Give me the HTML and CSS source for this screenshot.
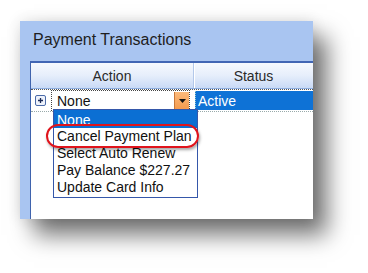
FILE: index.html
```html
<!DOCTYPE html>
<html>
<head>
<meta charset="utf-8">
<link rel="stylesheet" href="styles.css">
</head>
<body>
<div class="stage">
  <div class="panel">
    <div class="title">Payment Transactions</div>
    <div class="grid">
      <div class="header">
        <div class="hcell action">Action</div>
        <div class="hcell status">Status</div>
      </div>
      <div class="row">
        <div class="rowhead">
          <span class="plus"><svg width="11" height="11" viewBox="0 0 11 11"><rect x="0.5" y="0.5" width="10" height="10" rx="1.5" fill="#eef2fb" stroke="#4b6aa8"/><path d="M3 5.5h5M5.5 3v5" stroke="#1c2b57" stroke-width="1.3"/></svg></span>
        </div>
        <div class="combo">
          <span class="combotext">None</span>
          <span class="dropbtn"><svg width="7" height="4" viewBox="0 0 7 4"><path d="M0 0h7L3.5 4z" fill="#111"/></svg></span>
        </div>
        <div class="activecell">Active</div>
      </div>
    </div>
    <ul class="droplist">
      <li class="sel">None</li>
      <li>Cancel Payment Plan</li>
      <li>Select Auto Renew</li>
      <li>Pay Balance $227.27</li>
      <li>Update Card Info</li>
    </ul>
    <div class="oval"></div>
  </div>
</div>
</body>
</html>
```
FILE: styles.css
```css
html, body {
  margin: 0;
  padding: 0;
  background: #ffffff;
  width: 368px;
  height: 273px;
  overflow: hidden;
  font-family: "Liberation Sans", Arial, sans-serif;
}
.stage {
  padding: 21px 0 0 20px;
}
.panel {
  position: relative;
  width: 293px;
  height: 198px;
  background: #a9c5f1;
  box-shadow: 14px 16px 22px rgba(0,0,0,0.55), 0 0 14px rgba(0,0,0,0.12);
  display: flex;
  flex-direction: column;
}
.title {
  height: 40px;
  box-sizing: border-box;
  padding: 10px 0 0 13px;
  font-size: 16px;
  color: #1e1e1e;
}
.grid {
  margin-left: 10px;
  flex: 1;
  background: #ffffff;
  border-top: 2px solid #4166b4;
  border-left: 1px solid #3f63ad;
  display: flex;
  flex-direction: column;
}
.header {
  height: 25px;
  display: flex;
  background: linear-gradient(#f6f9fe, #e6eefb 50%, #c9daf6);
  border-bottom: 1px solid #8eaee0;
}
.hcell {
  display: flex;
  align-items: center;
  justify-content: center;
  font-size: 14px;
  color: #2a2a2a;
}
.action {
  width: 162px;
  border-right: 1px solid #b3c8ea;
  box-shadow: 1px 0 0 #ffffff;
}
.status {
  flex: 1;
}
.row {
  height: 21px;
  display: flex;
  align-items: stretch;
  border-top: 1px dotted #555;
  border-bottom: 1px dotted #9aa;
}
.rowhead {
  width: 20px;
  display: flex;
  align-items: center;
  padding-left: 4px;
  box-sizing: border-box;
}
.plus {
  display: block;
  width: 11px;
  height: 11px;
}
.plus svg { display: block; }
.combo {
  width: 139px;
  display: flex;
  align-items: center;
  border: 1px dotted #444;
  box-sizing: border-box;
  background: #fff;
}
.combotext {
  flex: 1;
  padding-left: 5px;
  font-size: 14px;
  color: #111;
}
.dropbtn {
  width: 14px;
  height: 18px;
  background: linear-gradient(#fbb97a, #f59a4c);
  border-left: 1px solid #c9783a;
  display: flex;
  align-items: center;
  justify-content: center;
}
.dropbtn svg { display: block; }
.activecell {
  flex: 1;
  margin-left: 5px;
  margin-top: 1px;
  margin-bottom: 1px;
  background: #0e72d6;
  color: #ffffff;
  font-size: 14px;
  display: flex;
  align-items: center;
  padding-left: 2px;
  border-left: 1px dotted #9cc;
}
.droplist {
  position: absolute;
  left: 33px;
  top: 88px;
  width: 145px;
  height: 89px;
  box-sizing: border-box;
  margin: 0;
  padding: 0;
  list-style: none;
  background: #ffffff;
  border: 1px solid #3557aa;
  font-size: 14px;
  color: #101010;
}
.droplist li {
  height: 17px;
  line-height: 17px;
  padding-left: 3px;
  white-space: nowrap;
}
.droplist li.sel {
  background: #0b6fd3;
  color: #ffffff;
  height: 16px;
  padding-top: 2px;
  line-height: 16px;
  overflow: hidden;
}
.oval {
  position: absolute;
  left: 26px;
  top: 103px;
  width: 153px;
  height: 24px;
  box-sizing: border-box;
  border: 2px solid #e0141c;
  border-radius: 12px;
  box-shadow: 1px 2px 3px rgba(0,0,0,0.35);
}
```
